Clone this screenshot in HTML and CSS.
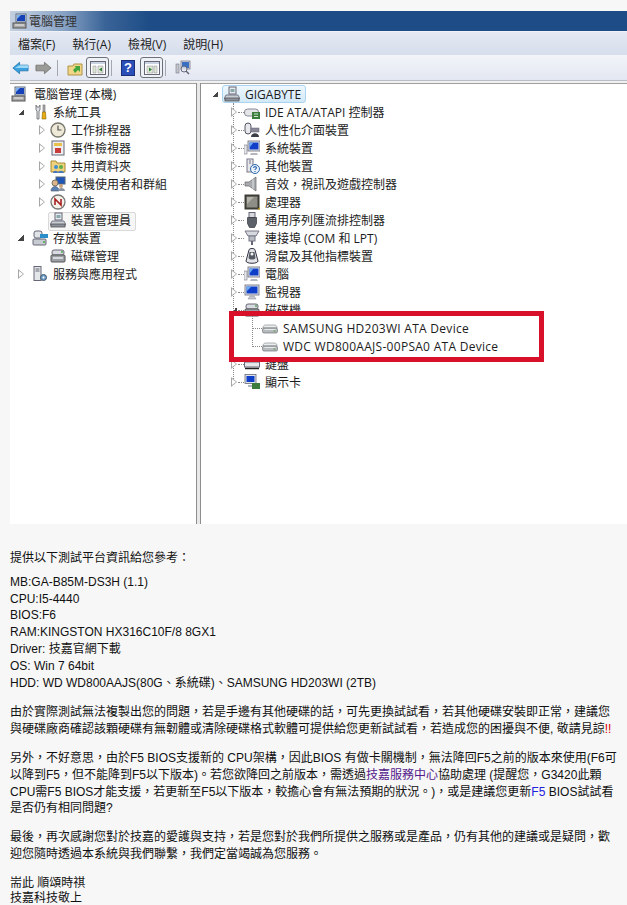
FILE: index.html
```html
<!DOCTYPE html>
<html lang="zh-Hant">
<head>
    <meta charset="UTF-8">
    <title>電腦管理</title>
    <link rel="stylesheet" href="styles.css">
</head>
<body>
    <svg class="sprites" width="0" height="0">
        <symbol id="i-computer" viewBox="0 0 16 16">
            <rect x="4" y="1" width="10" height="8" fill="#dfe6f0" stroke="#5a6a80"/>
            <rect x="5" y="2" width="8" height="6" fill="#1540b8"/>
            <path d="M5 2h4L5 6z" fill="#7fb0ee"/>
            <rect x="1" y="10" width="13" height="5" fill="#a8a8a8" stroke="#555"/>
            <path d="M3 12h9" stroke="#eee"/>
        </symbol>
        <symbol id="i-tools" viewBox="0 0 16 16">
            <path d="M4 1v5l1 1v8h2V7l1-1V1L7 3H5z" fill="#dde2e8" stroke="#666" stroke-width=".8"/>
            <rect x="11" y="1" width="2" height="7" fill="#b0b0b0" stroke="#666" stroke-width=".6"/>
            <path d="M10.500 8h3l.5 7h-4z" fill="#e9ad14" stroke="#8a6400" stroke-width=".6"/>
        </symbol>
        <symbol id="i-clock" viewBox="0 0 16 16">
            <circle cx="8" cy="8" r="7" fill="#efe9d8" stroke="#78786e" stroke-width="1.400"/>
            <path d="M8 3.500V8h3.500" fill="none" stroke="#555" stroke-width="1.200"/>
        </symbol>
        <symbol id="i-event" viewBox="0 0 16 16">
            <rect x="2" y="1" width="12" height="14" fill="#eceef2" stroke="#667"/>
            <rect x="4" y="3" width="8" height="3" fill="#e8c14c"/>
            <rect x="5" y="8" width="6" height="5" fill="#c83c3c"/>
        </symbol>
        <symbol id="i-share" viewBox="0 0 16 16">
            <path d="M1 3h5l1 2h8v9H1z" fill="#f0d27c" stroke="#a88a35"/>
            <circle cx="6" cy="9" r="2" fill="#3f8fd0"/>
            <circle cx="11" cy="9" r="2" fill="#5cae4c"/>
            <path d="M3 15c0-3 5-3 5 0zM8 15c0-3 6-3 6 0z" fill="#4a78b8"/>
        </symbol>
        <symbol id="i-users" viewBox="0 0 16 16">
            <rect x="6" y="1" width="9" height="7" fill="#1f56b8" stroke="#567"/>
            <circle cx="5" cy="7" r="3" fill="#e0b48a" stroke="#776"/>
            <path d="M1 15c0-6 8-6 8 0z" fill="#5c82b4" stroke="#456" stroke-width=".6"/>
            <circle cx="11" cy="10" r="2" fill="#c9a27c"/>
            <path d="M8 15c0-4 7-4 7 0z" fill="#8a94a4"/>
        </symbol>
        <symbol id="i-perf" viewBox="0 0 16 16">
            <circle cx="8" cy="8" r="7" fill="#f4f1ea" stroke="#777" stroke-width="1.300"/>
            <path d="M5 11V5l6 6V5" fill="none" stroke="#a81e22" stroke-width="1.600"/>
        </symbol>
        <symbol id="i-device" viewBox="0 0 16 16">
            <rect x="5" y="1" width="7" height="7" fill="#e8ebef" stroke="#667"/>
            <rect x="6.500" y="3" width="4" height="3" fill="#8aa"/>
            <path d="M0 13l2-4h12l2 4z" fill="#c9ced5" stroke="#667" stroke-width=".8"/>
            <rect x="1" y="12" width="14" height="3" fill="#8b929b" stroke="#555" stroke-width=".8"/>
        </symbol>
        <symbol id="i-storage" viewBox="0 0 16 16">
            <rect x="2" y="1" width="8" height="7" rx="2" fill="#dfe3e8" stroke="#667"/>
            <rect x="8" y="4" width="8" height="4" fill="#2a8ec8"/>
            <rect x="1" y="9" width="13" height="6" rx="1" fill="#c7ccd2" stroke="#667"/>
            <circle cx="12" cy="12" r="1" fill="#4a4"/>
        </symbol>
        <symbol id="i-disk" viewBox="0 0 16 16">
            <rect x="2" y="2" width="12" height="5" rx="2" fill="#d8dbdf" stroke="#667"/>
            <rect x="1" y="7" width="14" height="7" rx="1" fill="#9ba0a6" stroke="#555"/>
            <path d="M3 10h10" stroke="#eee" stroke-width="1.500"/>
            <circle cx="12" cy="4" r="1" fill="#5a5"/>
        </symbol>
        <symbol id="i-hdd" viewBox="0 0 16 16">
            <path d="M1 8c0-2 1-3 3-3h8c2 0 3 1 3 3z" fill="#eceeee" stroke="#8b9094" stroke-width=".7"/>
            <rect x="0.500" y="8" width="15" height="5" rx="1.500" fill="#b6babd" stroke="#6e7377" stroke-width=".7"/>
            <path d="M2.500 9.500h11" stroke="#e8eaeb"/>
            <rect x="11.500" y="10.500" width="2" height="1" fill="#5c9a54"/>
        </symbol>
        <symbol id="i-services" viewBox="0 0 16 16">
            <rect x="2" y="0.500" width="7" height="14" fill="#e4e7ea" stroke="#667"/>
            <path d="M3.500 3h4M3.500 5h4" stroke="#667"/>
            <circle cx="11.500" cy="11.500" r="3" fill="#6f9fcc" stroke="#456"/>
            <circle cx="11.500" cy="11.500" r="1" fill="#fff"/>
        </symbol>
        <symbol id="i-ide" viewBox="0 0 16 16">
            <rect x="0.500" y="5" width="14" height="7" rx="3" fill="#e3e5e6" stroke="#889"/>
            <rect x="8" y="8" width="8" height="7" fill="#3c7c3c"/>
            <path d="M10 10h4M10 12.500h4" stroke="#cde6c8"/>
        </symbol>
        <symbol id="i-hid" viewBox="0 0 16 16">
            <rect x="1" y="1" width="6" height="11" rx="3" fill="#e6e8eb" stroke="#556"/>
            <rect x="7" y="6" width="8" height="4" fill="#889" stroke="#667" stroke-width=".5"/>
            <path d="M7 15c0-5 8-5 8 0z" fill="#3a3f46"/>
        </symbol>
        <symbol id="i-sysdev" viewBox="0 0 16 16">
            <rect x="0" y="5" width="3" height="9" fill="#e6e8ea" stroke="#778" stroke-width=".6"/>
            <rect x="4" y="1" width="12" height="10" fill="#dfe3ea" stroke="#667" stroke-width=".8"/>
            <rect x="5.500" y="2.500" width="9" height="7" fill="#0f3fc8"/>
            <path d="M5.500 2.500h4l-4 5z" fill="#6fa8ee"/>
            <path d="M7 13h6l1 2H6z" fill="#b4b8be"/>
        </symbol>
        <symbol id="i-other" viewBox="0 0 16 16">
            <rect x="3" y="1" width="6" height="13" fill="#e5e7ea" stroke="#778"/>
            <path d="M5 3h2M5 5h2" stroke="#778"/>
            <circle cx="11" cy="11" r="4.500" fill="#e9f1fb" stroke="#2c66ae"/>
            <path d="M9.500 9.800c.3-1.600 3-1.500 3 0 0 1.100-1.500 1-1.500 2.200M11 13v1" fill="none" stroke="#2c66ae" stroke-width="1.100"/>
        </symbol>
        <symbol id="i-audio" viewBox="0 0 16 16">
            <path d="M1 6h4l7-5v14l-7-5H1z" fill="#a8acb1" stroke="#666" stroke-width=".7"/>
            <path d="M9 3v10" stroke="#ddd"/>
        </symbol>
        <symbol id="i-cpu" viewBox="0 0 16 16">
            <rect x="0.500" y="0.500" width="15" height="15" fill="#3c3c34"/>
            <rect x="2.500" y="2.500" width="11" height="11" fill="#8e8e86"/>
            <path d="M3 3h7L3 10z" fill="#b4b4ac"/>
            <path d="M13 15.500h3V13z" fill="#c29a26"/>
        </symbol>
        <symbol id="i-usb" viewBox="0 0 16 16">
            <rect x="5" y="0.500" width="6" height="5" fill="#d6d8dc" stroke="#667"/>
            <path d="M3.500 5.500h9v6l-2 4h-5l-2-4z" fill="#5c6068" stroke="#33363c" stroke-width=".7"/>
        </symbol>
        <symbol id="i-port" viewBox="0 0 16 16">
            <path d="M1 1h14l-3 5H4z" fill="#d6d9dd" stroke="#778"/>
            <rect x="5" y="6" width="6" height="5" fill="#b8bcc2" stroke="#778"/>
            <path d="M8 11v4" stroke="#667" stroke-width="2"/>
        </symbol>
        <symbol id="i-mouse" viewBox="0 0 16 16">
            <path d="M5 2c0-2 6-2 6 0l3 11c0 3-12 3-12 0z" fill="#e2e4e8" stroke="#334"/>
            <path d="M5.500 4h5l1 6c-1 2-6 2-7 0z" fill="#555a62"/>
            <circle cx="8" cy="6" r="1.500" fill="#f4f4f4"/>
        </symbol>
        <symbol id="i-monitor" viewBox="0 0 16 16">
            <rect x="1" y="1" width="14" height="10" fill="#dfe3ea" stroke="#667" stroke-width=".8"/>
            <rect x="2.500" y="2.500" width="11" height="7" fill="#0f3fc8"/>
            <path d="M2.500 2.500h5l-5 5z" fill="#6fa8ee"/>
            <path d="M6 12h4l2 3H4z" fill="#c4c7cc" stroke="#889" stroke-width=".5"/>
        </symbol>
        <symbol id="i-keyboard" viewBox="0 0 16 16">
            <rect x="0.500" y="6" width="15" height="5" fill="#e5e7ea" stroke="#667"/>
            <path d="M1 12.500h14" stroke="#222" stroke-width="1.500"/>
        </symbol>
        <symbol id="i-display" viewBox="0 0 16 16">
            <rect x="1" y="0.500" width="11" height="9" fill="#dfe3ea" stroke="#667" stroke-width=".8"/>
            <rect x="2.500" y="2" width="8" height="6" fill="#0f3fc8"/>
            <rect x="8" y="9" width="8" height="6" fill="#3c7c3c"/>
            <path d="M4 11h4v2H4z" fill="#b4b8be"/>
        </symbol>
        <symbol id="i-back" viewBox="0 0 18 14">
            <path d="M1 7l7-6v3h9v6H8v3z" fill="#3aa2e0" stroke="#1d6ea8" stroke-width=".8"/>
            <path d="M8 4h9v3H3z" fill="#9ad8f6"/>
        </symbol>
        <symbol id="i-forward" viewBox="0 0 18 14">
            <path d="M17 7l-7-6v3H1v6h9v3z" fill="#9a9a96" stroke="#6c6c68" stroke-width=".8"/>
        </symbol>
        <symbol id="i-up" viewBox="0 0 16 16">
            <path d="M1 6h5l1-2h8v11H1z" fill="#f2d688" stroke="#b09444"/>
            <path d="M6 10l3-3-2-1h6v6l-2-2-3 3z" fill="#43a63c"/>
        </symbol>
        <symbol id="i-tree-left" viewBox="0 0 16 16">
            <rect x="0.500" y="1.500" width="15" height="13" fill="#fff" stroke="#667"/>
            <rect x="1" y="2" width="14" height="2" fill="#c8d2e0"/>
            <path d="M3 6h3v7H3zM8 6h5v7H8z" fill="#dfe8d4" stroke="#889" stroke-width=".5"/>
            <path d="M12 7.500v4l-3-2z" fill="#2f7d3c"/>
        </symbol>
        <symbol id="i-tree-right" viewBox="0 0 16 16">
            <rect x="0.500" y="1.500" width="15" height="13" fill="#fff" stroke="#667"/>
            <rect x="1" y="2" width="14" height="2" fill="#c8d2e0"/>
            <path d="M3 6h6v7H3zM10 6h3v7h-3z" fill="#dfe8d4" stroke="#889" stroke-width=".5"/>
            <path d="M5 7.500v4l3-2z" fill="#2f7d3c"/>
        </symbol>
        <symbol id="i-connect" viewBox="0 0 16 16">
            <rect x="1" y="4" width="3" height="9" fill="#c4c8cc" stroke="#778" stroke-width=".6"/>
            <rect x="6" y="1" width="9" height="8" fill="#dfe4ec" stroke="#667" stroke-width=".7"/>
            <rect x="7" y="2" width="7" height="6" fill="#3b6fc4"/>
            <circle cx="9" cy="9" r="3" fill="#e8eef6" fill-opacity=".7" stroke="#667"/>
            <path d="M11 11l3 3" stroke="#667" stroke-width="1.500"/>
        </symbol>
    </svg>

    <div class="window">
        <div class="title-bar">
            <svg class="icon"><use href="#i-computer"/></svg>
            <span>電腦管理</span>
        </div>
        <div class="menu-bar">
            <span>檔案(F)</span>
            <span>執行(A)</span>
            <span>檢視(V)</span>
            <span>說明(H)</span>
        </div>
        <div class="tool-bar">
            <svg class="tool-arrow"><use href="#i-back"/></svg>
            <svg class="tool-arrow"><use href="#i-forward"/></svg>
            <i class="tool-sep"></i>
            <svg class="icon tool-up"><use href="#i-up"/></svg>
            <b class="tool-btn"><svg class="icon"><use href="#i-tree-left"/></svg></b>
            <i class="tool-sep"></i>
            <b class="tool-help">?</b>
            <b class="tool-btn"><svg class="icon"><use href="#i-tree-right"/></svg></b>
            <i class="tool-sep"></i>
            <svg class="icon"><use href="#i-connect"/></svg>
        </div>
        <div class="panes">
            <div class="pane pane-left">
                <div class="row"><svg class="icon"><use href="#i-computer"/></svg><span>電腦管理 (本機)</span></div>
                <div class="row d1"><i class="arrow open"></i><svg class="icon"><use href="#i-tools"/></svg><span>系統工具</span></div>
                <div class="row d2"><i class="arrow"></i><svg class="icon"><use href="#i-clock"/></svg><span>工作排程器</span></div>
                <div class="row d2"><i class="arrow"></i><svg class="icon"><use href="#i-event"/></svg><span>事件檢視器</span></div>
                <div class="row d2"><i class="arrow"></i><svg class="icon"><use href="#i-share"/></svg><span>共用資料夾</span></div>
                <div class="row d2"><i class="arrow"></i><svg class="icon"><use href="#i-users"/></svg><span>本機使用者和群組</span></div>
                <div class="row d2"><i class="arrow"></i><svg class="icon"><use href="#i-perf"/></svg><span>效能</span></div>
                <div class="row leaf selected"><svg class="icon"><use href="#i-device"/></svg><span>裝置管理員</span></div>
                <div class="row d1"><i class="arrow open"></i><svg class="icon"><use href="#i-storage"/></svg><span>存放裝置</span></div>
                <div class="row leaf"><svg class="icon"><use href="#i-disk"/></svg><span>磁碟管理</span></div>
                <div class="row d1"><i class="arrow"></i><svg class="icon"><use href="#i-services"/></svg><span>服務與應用程式</span></div>
            </div>
            <div class="pane-split"></div>
            <div class="pane pane-right">
                <div class="row root"><i class="arrow open"></i><span class="root-label"><svg class="icon"><use href="#i-device"/></svg><span>GIGABYTE</span></span></div>
                <div class="branch">
                    <div class="row node"><i class="arrow"></i><i class="stub"></i><svg class="icon"><use href="#i-ide"/></svg><span>IDE ATA/ATAPI 控制器</span></div>
                    <div class="row node"><i class="arrow"></i><i class="stub"></i><svg class="icon"><use href="#i-hid"/></svg><span>人性化介面裝置</span></div>
                    <div class="row node"><i class="arrow"></i><i class="stub"></i><svg class="icon"><use href="#i-sysdev"/></svg><span>系統裝置</span></div>
                    <div class="row node"><i class="arrow"></i><i class="stub"></i><svg class="icon"><use href="#i-other"/></svg><span>其他裝置</span></div>
                    <div class="row node"><i class="arrow"></i><i class="stub"></i><svg class="icon"><use href="#i-audio"/></svg><span>音效，視訊及遊戲控制器</span></div>
                    <div class="row node"><i class="arrow"></i><i class="stub"></i><svg class="icon"><use href="#i-cpu"/></svg><span>處理器</span></div>
                    <div class="row node"><i class="arrow"></i><i class="stub"></i><svg class="icon"><use href="#i-usb"/></svg><span>通用序列匯流排控制器</span></div>
                    <div class="row node"><i class="arrow"></i><i class="stub"></i><svg class="icon"><use href="#i-port"/></svg><span>連接埠 (COM 和 LPT)</span></div>
                    <div class="row node"><i class="arrow"></i><i class="stub"></i><svg class="icon"><use href="#i-mouse"/></svg><span>滑鼠及其他指標裝置</span></div>
                    <div class="row node"><i class="arrow"></i><i class="stub"></i><svg class="icon"><use href="#i-sysdev"/></svg><span>電腦</span></div>
                    <div class="row node"><i class="arrow"></i><i class="stub"></i><svg class="icon"><use href="#i-monitor"/></svg><span>監視器</span></div>
                    <div class="row node"><i class="arrow open"></i><i class="stub"></i><svg class="icon"><use href="#i-disk"/></svg><span>磁碟機</span></div>
                    <div class="children">
                        <div class="row child"><i class="stub"></i><svg class="icon"><use href="#i-hdd"/></svg><span>SAMSUNG HD203WI ATA Device</span></div>
                        <div class="row child"><i class="stub"></i><svg class="icon"><use href="#i-hdd"/></svg><span>WDC WD800AAJS-00PSA0 ATA Device</span></div>
                    </div>
                    <div class="row node"><i class="arrow"></i><i class="stub"></i><svg class="icon"><use href="#i-keyboard"/></svg><span>鍵盤</span></div>
                    <div class="row node"><i class="arrow"></i><i class="stub"></i><svg class="icon"><use href="#i-display"/></svg><span>顯示卡</span></div>
                </div>
                <div class="red-box"></div>
            </div>
        </div>
    </div>

    <div class="reply">
        <p class="intro">提供以下測試平台資訊給您參考：</p>
        <p class="specs">
            MB:GA-B85M-DS3H (1.1)<br>
            CPU:I5-4440<br>
            BIOS:F6<br>
            RAM:KINGSTON HX316C10F/8 8GX1<br>
            Driver: 技嘉官網下載<br>
            OS: Win 7 64bit<br>
            HDD: WD WD800AAJS(80G、系統碟)、SAMSUNG HD203WI (2TB)
        </p>
        <p>由於實際測試無法複製出您的問題，若是手邊有其他硬碟的話，可先更換試試看，若其他硬碟安裝即正常，建議您<br>
        與硬碟廠商確認該顆硬碟有無韌體或清除硬碟格式軟體可提供給您更新試試看，若造成您的困擾與不便, 敬請見諒<span class="red">!!</span></p>
        <p>另外，不好意思，由於F5 BIOS支援新的 CPU架構，因此BIOS 有做卡關機制，無法降回F5之前的版本來使用(F6可<br>
        以降到F5，但不能降到F5以下版本)。若您欲降回之前版本，需透過<span class="link">技嘉服務中心</span>協助處理 (提醒您，G3420此顆<br>
        CPU需F5 BIOS才能支援，若更新至F5以下版本，較擔心會有無法預期的狀況。)，或是建議您更新<span class="blue">F5</span> BIOS試試看<br>
        是否仍有相同問題?</p>
        <p>最後，再次感謝您對於技嘉的愛護與支持，若是您對於我們所提供之服務或是產品，仍有其他的建議或是疑問，歡<br>
        迎您隨時透過本系統與我們聯繫，我們定當竭誠為您服務。</p>
        <p class="sign">耑此 順頌時祺<br>技嘉科技敬上</p>
    </div>
</body>
</html>
```

FILE: styles.css
```css
* {
    margin: 0;
    padding: 0;
    box-sizing: border-box;
}

body {
    background: #f7f7f7;
    width: 627px;
    height: 905px;
    overflow: hidden;
    padding-top: 11px;
    color: #111;
    font-family: "Liberation Sans", "Noto Sans CJK TC", sans-serif;
    font-size: 12px;
}

.sprites {
    position: absolute;
}

.icon {
    width: 16px;
    height: 16px;
    flex: none;
}

/* window screenshot */
.window {
    margin-left: 10px;
    height: 513px;
    display: flex;
    flex-direction: column;
    background: #f0f0f0;
    font-family: "Open Sans", "Noto Sans CJK TC", sans-serif;
    font-size: 12px;
    color: #1c1c1c;
}

.title-bar {
    height: 21px;
    display: flex;
    align-items: center;
    gap: 1px;
    padding-left: 2px;
    background: linear-gradient(90deg, #c3cfdf 0, #b2c3da 20px, #86a1c3 55px, #3a6498 95px, #1d4c86 140px, #1d4c86 100%);
    border-bottom: 1px solid #eef2f7;
    color: #333;
}

.menu-bar {
    height: 23px;
    display: flex;
    align-items: center;
    gap: 17px;
    padding-left: 8px;
    background: linear-gradient(#e4e9f3, #d6deec);
}

.tool-bar {
    height: 26px;
    display: flex;
    align-items: center;
    padding-left: 2px;
    background: linear-gradient(#f2f4f9, #e3e7f1);
    border-bottom: 1px solid #b9bec6;
}

.tool-arrow {
    width: 17px;
    height: 14px;
    margin-right: 6px;
}

.tool-arrow + .tool-arrow {
    margin-right: 5px;
}

.tool-sep {
    width: 1px;
    height: 16px;
    background: #a3a8b0;
    margin-right: 9px;
}

.tool-up {
    margin-right: 3px;
}

.tool-btn {
    width: 23px;
    height: 21px;
    margin-right: 2px;
    display: flex;
    align-items: center;
    justify-content: center;
    border: 1px solid #6c7078;
    border-radius: 3px;
    background: #eef1f6;
}

.tool-help {
    width: 14px;
    height: 16px;
    margin-right: 5px;
    background: #2b4fb8;
    border: 1px solid #1b2f78;
    color: #fff;
    font-family: "Liberation Sans", sans-serif;
    font-size: 13px;
    line-height: 14px;
    text-align: center;
}

.panes {
    flex: 1;
    display: flex;
    padding-top: 2px;
}

.pane {
    background: #fff;
    padding-top: 1px;
    position: relative;
}

.pane-left {
    width: 186px;
    border-top: 1px solid #a0a0a0;
}

.pane-split {
    width: 5px;
    background: #e8e8e8;
    border-left: 1px solid #8e8e8e;
    border-right: 1px solid #8e8e8e;
}

.pane-right {
    flex: 1;
    border-top: 1px solid #a0a0a0;
}

/* tree rows */
.row {
    height: 18px;
    display: flex;
    align-items: center;
    white-space: nowrap;
}

.row > span {
    margin-left: 5px;
}

.pane-left .row {
    padding-left: 1px;
}

.pane-left .row > span {
    margin-left: 7px;
}

.pane-left .row.d1 {
    padding-left: 8px;
}

.pane-left .row.d1 .arrow {
    margin-right: 8px;
}

.pane-left .row.d1 > span,
.pane-left .row.d2 > span,
.pane-left .row.leaf > span {
    margin-left: 5px;
}

.pane-left .row.d2 {
    padding-left: 29px;
}

.pane-left .row.d2 .arrow {
    margin-right: 5px;
}

.pane-left .row.leaf {
    padding-left: 40px;
}

.pane-left .row.selected {
    position: relative;
}

.pane-left .row.selected::before {
    content: "";
    position: absolute;
    left: 38px;
    top: 1px;
    width: 86px;
    height: 17px;
    border: 1px solid #d9d9d9;
    border-radius: 2px;
    background: #f6f6f6;
}

.row.selected > * {
    position: relative;
}

.arrow {
    width: 6px;
    height: 10px;
    flex: none;
    border-left: 6px solid #a6a6a6;
    border-top: 5px solid transparent;
    border-bottom: 5px solid transparent;
    position: relative;
}

.arrow::after {
    content: "";
    position: absolute;
    left: -5px;
    top: -3px;
    border-left: 4px solid #fff;
    border-top: 3px solid transparent;
    border-bottom: 3px solid transparent;
}

.arrow.open {
    border: none;
    width: 6px;
    height: 6px;
    background: linear-gradient(135deg, transparent 50%, #444 50%);
}

.arrow.open::after {
    display: none;
}

.root {
    padding-left: 11px;
}

.root .arrow {
    margin-right: 4px;
}

.root-label {
    display: flex;
    align-items: center;
    gap: 5px;
    width: 84px;
    height: 18px;
    margin-left: 0 !important;
    padding-left: 1px;
    border: 1px solid #a9d3ee;
    border-radius: 3px;
    background: linear-gradient(#eef7fd, #d2e9f8);
}

.branch {
    margin-left: 32px;
    border-left: 1px dotted #8a8a8a;
    height: 280px;
}

.node {
    margin-left: -3px;
}

.node .arrow {
    margin-right: 1px;
}

.stub {
    width: 6px;
    height: 0;
    border-top: 1px dotted #8a8a8a;
    flex: none;
}

.children {
    margin-left: 18px;
    position: relative;
}

.children::before {
    content: "";
    position: absolute;
    left: 0;
    top: -8px;
    height: 34px;
    border-left: 1px dotted #8a8a8a;
}

.child .stub {
    width: 10px;
}

.child > span {
    letter-spacing: 0.28px;
}

.red-box {
    position: absolute;
    left: 28px;
    top: 227px;
    width: 315px;
    height: 51px;
    border: 5px solid #d8102a;
}

/* reply text */
.reply {
    margin-left: 10px;
    padding-top: 26px;
    line-height: 16.8px;
    white-space: nowrap;
}

.reply p {
    margin-bottom: 12px;
}

.reply .intro {
    margin-bottom: 7px;
}

.reply .specs {
    margin-bottom: 13px;
}

.reply .sign {
    margin-top: 13px;
    line-height: 15px;
}

.red {
    color: #d00;
}

.link {
    color: #551a8b;
}

.blue {
    color: #2222dd;
}
```
